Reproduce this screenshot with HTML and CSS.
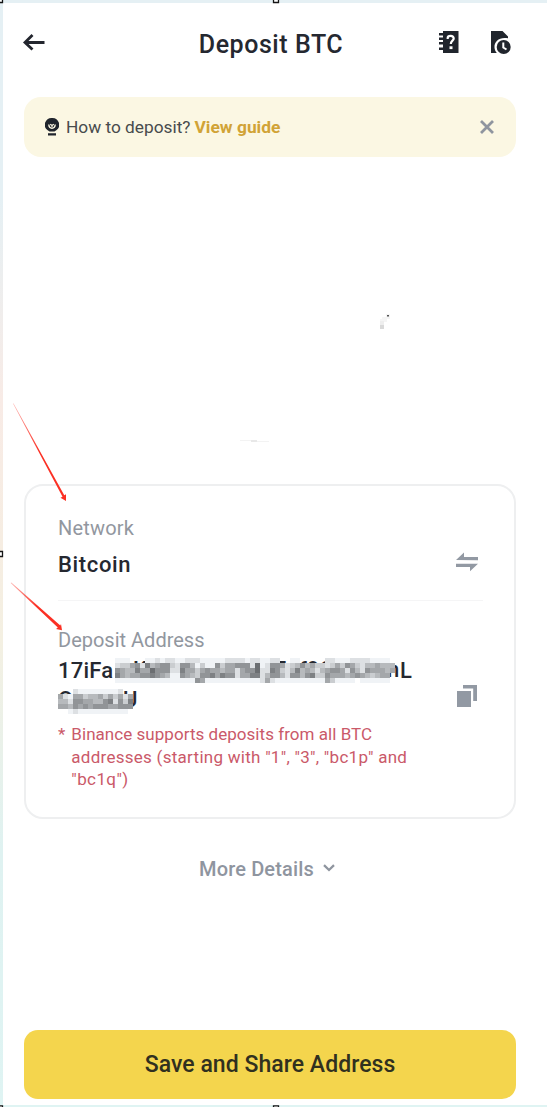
FILE: index.html
```html
<!DOCTYPE html>
<html lang="en">
<head>
<meta charset="utf-8">
<title>Deposit BTC</title>
<link rel="stylesheet" href="styles.css">
</head>
<body>
<div class="screen">
  <header class="topbar">
    <svg class="back" width="24" height="20" viewBox="0 0 24 20"><path d="M22.500 10.500H3M10.500 3L3 10.500l7.500 7" fill="none" stroke="#23262e" stroke-width="2.800"/></svg>
    <h1 class="title">Deposit BTC</h1>
    <div class="actions">
      <svg width="20" height="22" viewBox="0 0 20 22"><path fill="#20252d" d="M4 0h15.500v22H4v-3H0v-2.500h4v-3H0V11h4V9H0V6.500h4v-2H0V2h4z"/><path d="M8.700 8V7c0-1.500 1.200-2.200 3-2.200s3 .9 3 2.700c0 2.300-2.900 2-2.900 5.500" fill="none" stroke="#fff" stroke-width="2.200"/><path fill="#fff" d="M10.500 15.300h3v2.800h-3z"/></svg>
      <svg width="20" height="23" viewBox="0 0 20 23"><path fill="#20252d" d="M0 0h11.500L17 5.500V7.300C9 5.500 3 10 3.500 16.500c.1 2 1 4 2.300 5.500H0z"/><circle cx="12.700" cy="16" r="7" fill="#20252d"/><path d="M12.300 11.500v5l3.200 2" fill="none" stroke="#fff" stroke-width="2"/></svg>
    </div>
  </header>
  <section class="guide">
    <svg width="14" height="18" viewBox="0 0 14 18"><path fill="#20252d" d="M7 0a7 6.800 0 0 1 4.300 12.300L9.500 13.500h-5L2.700 12.300A7 6.800 0 0 1 7 0zM3 15.200h8v2.300H3z"/><path d="M3.800 6.500Q4 10.200 7 10.200T10.200 6.500" fill="none" stroke="#fbf7e3" stroke-width="1.400"/><path d="M5.200 6.200L7 7.500l1.800-1.300M7 7v2" fill="none" stroke="#fbf7e3" stroke-width="1.200"/></svg>
    <span class="question">How to deposit?</span>
    <a class="link">View guide</a>
    <svg class="close" width="14" height="14" viewBox="0 0 14 14"><path d="M1 1l12 12M13 1L1 13" stroke="#8f959f" stroke-width="2.800"/></svg>
  </section>
  <section class="qr">
    <svg width="492" height="327" viewBox="24 157 492 327"><path fill="#f5f5f5" d="M382 317h4v-3h4v5h-3v3h-7v-3h2z"/><path fill="#d9d9d9" d="M380 325h4v4h-4z"/><path fill="#eee" d="M380 321h4v4h-4z"/><path fill="#555" d="M387 315h2v1.500h-2z"/><path fill="#f3f3f3" d="M240 440h12v1h-12zM257 441h12v1h-12z"/><path fill="#e8e8e8" d="M251 440h6v2h-6z"/></svg>
  </section>
  <section class="card">
    <div class="row network">
      <div><div class="label label-network">Network</div><div class="value">Bitcoin</div></div>
      <svg width="22" height="20" viewBox="0 0 22 20"><path fill="#9299a3" d="M0 8L8 .5V5h14v3.200zM0 11.800h22l-8 7.500v-4.200H0z"/></svg>
    </div>
    <div class="row deposit">
      <div>
        <div class="label label-address">Deposit Address</div>
        <div class="address">
          <div class="line"><span class="start">17iFa</span><svg id="mask-one" width="284" height="28"><text x="18" y="19">K</text><text x="159" y="19">F</text><text x="184" y="19">f9Q</text><text x="234" y="19">p</text><text x="272" y="19">n</text></svg><span class="end">L</span></div>
          <div class="line second"><svg id="mask-two" width="84" height="28"><text x="0" y="18">Q</text><text x="48" y="18">k</text><text x="65" y="18">U</text></svg></div>
        </div>
        <p class="note"><span>*</span><span class="note-text"><span class="n1">Binance supports deposits from all BTC</span><br><span class="n2">addresses (starting with "1", "3", "bc1p" and</span><br><span class="n3">"bc1q")</span></span></p>
      </div>
      <svg class="copy" width="20" height="22" viewBox="0 0 20 22"><path fill="#9299a3" d="M0 6h14v16H0zM6 0h14v16h-3.800V3.500H6z"/></svg>
    </div>
  </section>
  <div class="more"><span>More Details</span><svg width="12" height="8" viewBox="0 0 12 8"><path d="M1 1.200l5 4.800 5-4.800" fill="none" stroke="#8f959f" stroke-width="2.300"/></svg></div>
  <button class="save"><span>Save and Share Address</span></button>
</div>
<svg class="overlay" width="547" height="1107" viewBox="0 0 547 1107">
  <defs>
    <linearGradient id="fade1" gradientUnits="userSpaceOnUse" x1="13" y1="404" x2="65" y2="500"><stop stop-color="#fb3024" stop-opacity=".35"/><stop offset=".5" stop-color="#fb3024"/></linearGradient>
    <linearGradient id="fade2" gradientUnits="userSpaceOnUse" x1="11" y1="583" x2="62" y2="630"><stop stop-color="#fb3024" stop-opacity=".35"/><stop offset=".5" stop-color="#fb3024"/></linearGradient>
  </defs>
  <path fill="url(#fade1)" d="M13 403.500L13.600 403.500 64.300 495.300l1.700-1V501l-5.500-3.200 2-1z"/>
  <path fill="url(#fade2)" d="M10.700 583L11.300 582.600 60.300 625.500l.7-1.500 1 6.300-6-1.300 1.800-1.500z"/>
  <path fill="#fff" stroke="#151515" stroke-width="1.300" d="M-2.500-2.500h5v5h-5zM273.500-2.500h5v5h-5zM-2.500 551.500h5v5h-5zM-2.500 1105.800h5v5h-5zM273.500 1105.800h5v5h-5z"/>
</svg>
<script src="mosaic.js"></script>
</body>
</html>
```
FILE: styles.css
```css
* { box-sizing: border-box; }
body { margin: 0; height: 1107px; overflow: hidden; position: relative; background: #fff; font-family: Roboto, "Liberation Sans", sans-serif; color: #252830; }
svg { display: block; flex: none; }
.screen { height: 1107px; padding: 0 31px 0 21px; border-left: 3px solid; border-image: linear-gradient(#e5f0f4 0, #e5f0f4 200px, #f8ebe6 400px, #f6ede2 540px, #f4f0e2 640px, #dff2f1 850px, #dff4f3 1107px) 1; display: flex; flex-direction: column; background: linear-gradient(#e5f0f4 0 3px, #fff 3px 1105px, #dff4f3 1105px); }
.topbar { height: 97px; padding-top: 31px; display: flex; align-items: flex-start; justify-content: space-between; flex: none; }
.back { margin: 1px 0 0 -2px; }
.title { margin: 0 0 0 111px; font-size: 25px; line-height: 28px; font-weight: 500; letter-spacing: .55px; white-space: nowrap; }
.actions { display: flex; gap: 32px; padding-right: 5px; margin-left: 54px; }
.guide { height: 60px; padding: 0 22px 0 21px; border-radius: 17px; background: #fbf7e3; display: flex; align-items: center; flex: none; white-space: nowrap; }
.question { margin-left: 7px; font-size: 17.3px; color: #484b4d; }
.link { margin-left: 4px; font-size: 17.400px; font-weight: 700; color: #d1a336; }
.close { margin-left: auto; }
.qr { height: 327px; flex: none; }
.card { height: 335px; flex: none; border: 2px solid #eeeff0; border-radius: 19px; padding: 30px 31px 0 32px; }
.row { display: flex; justify-content: space-between; white-space: nowrap; }
.network { height: 85px; border-bottom: 1px solid #f5f5f6; padding-right: 5px; }
.network > svg { margin-top: 36px; }
.label { font-size: 20px; line-height: 24px; color: #92979f; }
.label-network { letter-spacing: .2px; }
.value { font-size: 22px; line-height: 28px; margin-top: 11px; font-weight: 500; letter-spacing: .65px; }
.deposit { padding: 27px 6px 0 0; }
.address { font-size: 22px; line-height: 26px; margin-top: 6px; font-weight: 500; }
.address text { font-size: 22px; fill: #252830; }
.address svg { overflow: visible; }
.line { height: 28px; display: flex; }
.second { padding-top: 3px; }
.start { width: 57px; letter-spacing: .25px; }
.end { margin-left: 1px; }
.note { margin: 9px 0 0; display: flex; gap: 6px; font-size: 17px; line-height: 22.500px; color: #ca5969; }
.n1 { letter-spacing: .04px; }
.n2 { letter-spacing: .27px; }
.n3 { letter-spacing: .4px; }
.copy { margin-top: 57px; }
.more { height: 30px; margin-top: 35px; padding-left: 175px; display: flex; align-items: center; gap: 9px; font-size: 20px; letter-spacing: .15px; font-weight: 500; color: #8f959f; flex: none; white-space: nowrap; }
.more svg { margin-top: -3px; }
.save { height: 69px; margin-top: 145.500px; border: 0; border-radius: 14px; background: #f4d54d; color: #30301f; font: 500 23px Roboto, sans-serif; letter-spacing: .05px; flex: none; }
.overlay { position: absolute; inset: 0; pointer-events: none; }
```
FILE: mosaic.js
```javascript
// Each digit is a tile's darkness, from 1 (light) to 9; 0 leaves the tile out.
function drawMosaic(id, rows, size) {
  const svg = document.getElementById(id);
  rows.forEach((row, y) => [...row].forEach((v, x) => {
    if (v === '0') return;
    const level = 262 - v * 19;
    const tile = document.createElementNS('http://www.w3.org/2000/svg', 'rect');
    tile.setAttribute('x', x * size);
    tile.setAttribute('y', y * size);
    tile.setAttribute('width', size);
    tile.setAttribute('height', size);
    tile.setAttribute('fill', `rgb(${level - 3}, ${level}, ${level + 3})`);
    tile.setAttribute('shape-rendering', 'crispEdges');
    svg.appendChild(tile);
  }));
}
drawMosaic('mask-one', [
  '111000112122112221111122221221122001100000221112222111100',
  '233562745663266413116355666281266523464533235365324454440',
  '654475586662275535655455256682276324745424566526426555450',
  '754556676541165436675766255772466426646733655545654345500',
  '111111111111111165111111111112521111111111531111011111100'
], 5);
drawMosaic('mask-two', [
  '0002111111112000',
  '5215534453535250',
  '4426655446726370',
  '5546565666556660',
  '0012111111111100'
], 5);
```
